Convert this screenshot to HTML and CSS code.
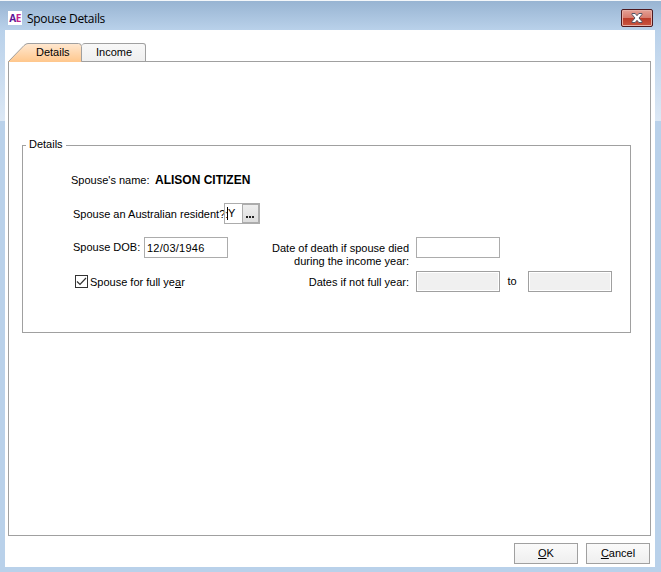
FILE: index.html
```html
<!DOCTYPE html>
<html lang="en">
<head>
<meta charset="utf-8">
<title>Spouse Details</title>
<link rel="stylesheet" href="styles.css">
</head>
<body>
<div class="window">
  <header class="titlebar">
    <span class="app-icon"><span class="app-a">A</span><span class="app-e">E</span></span>
    <h1 class="title">Spouse Details</h1>
    <button class="close" aria-label="Close">
      <svg width="12" height="10" viewBox="0 0 12 10"><path d="M1 .5h3.2L6 2.7 7.8.5H11v1L8 5l3 3.5v1H7.8L6 7.3 4.2 9.5H1v-1L4 5 1 1.5z" fill="#fff" stroke="#535666" stroke-width="1"/></svg>
    </button>
  </header>
  <main class="client">
    <nav class="tabs">
      <div class="tab tab-active">
        <svg class="tab-shape" width="74" height="19" viewBox="0 0 74 19">
          <defs><linearGradient id="warm" x1="0" y1="0" x2="0" y2="1"><stop offset="0" stop-color="#ffe8d1"/><stop offset="1" stop-color="#ffc78c"/></linearGradient></defs>
          <path d="M.5 19v-.8L16 2.5Q18 .5 20 .5H70.500Q73.500 .5 73.500 3.500V19z" fill="url(#warm)"/>
          <path d="M.5 18.500L16 2.500Q18 .5 20 .5H70.500Q73.500 .5 73.500 3.500V18.500" fill="none" stroke="#a0a0a0"/>
        </svg>
        <span class="tab-label t-details">Details</span>
      </div>
      <div class="tab tab-plain"><span class="tab-label t-income">Income</span></div>
    </nav>
    <section class="page">
      <div class="group">
        <span class="legend">Details</span>
        <div class="row row-name"><span class="label l-name">Spouse's name:</span><strong class="name">ALISON CITIZEN</strong></div>
        <div class="row row-resident">
          <span class="label l-resident">Spouse an Australian resident?:</span>
          <div class="lookup"><span class="caret"></span><span class="lookup-value">Y</span><button class="more"><i></i><i></i><i></i></button></div>
        </div>
        <div class="row row-dob">
          <span class="label l-dob">Spouse DOB:</span>
          <div class="field dob">12/03/1946</div>
          <span class="label l-death"><span class="line1">Date of death if spouse died</span><br><span class="line2">during the income year:</span></span>
          <div class="field"></div>
        </div>
        <div class="row row-full">
          <span class="check"><svg width="11" height="11" viewBox="0 0 11 11"><path d="M1 5.500L4 8.500L10 2" fill="none" stroke="#333" stroke-width="1.200"/></svg></span>
          <span class="label l-full">Spouse for full ye<u>a</u>r</span>
          <span class="label l-dates">Dates if not full year:</span>
          <div class="field disabled"></div>
          <span class="label l-to">to</span>
          <div class="field disabled"></div>
        </div>
      </div>
    </section>
    <footer class="actions">
      <button class="btn"><span class="b-ok"><u>O</u>K</span></button>
      <button class="btn"><span class="b-cancel"><u>C</u>ancel</span></button>
    </footer>
  </main>
</div>
</body>
</html>
```
FILE: styles.css
```css
* { box-sizing: border-box; }
body { margin: 0; font: 11px/13px "Liberation Sans", Arial, sans-serif; color: #000; }
button { font: inherit; color: inherit; padding: 0; margin: 0; }
.window {
  width: 661px; height: 572px; padding: 0 6px 5px 5px;
  background: linear-gradient(#98b4d2, #b9d1ea 30px, #dce8f5 120px, #b9d1ea 120px);
  border-top: 1px solid #f4f7fa;
}
.titlebar {
  height: 29px; display: flex; align-items: flex-start; margin: 0 -6px 0 -5px; padding-left: 8px;
  background: linear-gradient(#98b4d2, #b9d1ea);
}
.app-icon { width: 14px; height: 14px; margin-top: 10px; background: #fff; display: flex; justify-content: center; font: bold 10px/14px "Open Sans", sans-serif; letter-spacing: -.4px; }
.app-a { color: #5a1398; }
.app-e { color: #c3218c; }
.title { margin: 9px auto 0 5px; font: 12px/17px "Open Sans", sans-serif; letter-spacing: -.3px; white-space: nowrap; }
.close {
  width: 32px; height: 18px; margin: 8px 8px 0 0; border: 1px solid #4e1a1f; border-radius: 2px;
  background: linear-gradient(#e5a196, #d77b6d 48%, #bb3c2a 52%, #c95540);
  box-shadow: inset 0 0 0 1px #e7aea5; display: flex; align-items: center; justify-content: center;
}
.client { height: 537px; background: #fff; padding: 13px 4px 0 3px; }
.tabs { display: flex; height: 18px; }
.tab { position: relative; height: 19px; display: flex; align-items: center; }
.tab-active { width: 74px; z-index: 1; }
.tab-shape { position: absolute; left: 0; top: 0; }
.tab-label { position: relative; }
.t-details { margin-left: 28px; }
.tab-plain { width: 64px; border: 1px solid #a0a0a0; border-left: 0; border-radius: 3px 3px 0 0; background: linear-gradient(#f8f8f8, #efefef); }
.t-income { margin-left: 14px; }
.page { height: 475px; border: 1px solid #a0a0a0; padding: 83px 19px 0 13px; width: 643px; }
.group { position: relative; height: 188px; border: 1px solid #a0a0a0; padding-top: 28px; }
.legend { position: absolute; left: 3px; top: -8px; padding: 0 3px; background: #fff; }
.row { display: flex; align-items: flex-start; white-space: nowrap; }
.label { flex: none; }
.row-name { height: 29px; padding-left: 48px; }
.l-name { width: 84px; }
.name { font-size: 12px; line-height: 13px; }
.row-resident { height: 34px; padding-left: 50px; }
.l-resident { width: 151px; margin-top: 5px; }
.lookup { width: 36px; height: 21px; border: 1px solid #acacac; display: flex; align-items: center; padding-left: 2px; }
.caret { width: 1px; height: 13px; background: #000; }
.lookup-value { width: 14px; }
.more { width: 18px; height: 19px; border: 1px solid #acacac; background: linear-gradient(#eee, #ddd); display: flex; justify-content: center; gap: 1px; padding-top: 11px; }
.more i { width: 2px; height: 2px; background: #222; }
.row-dob { height: 34px; padding-left: 50px; }
.l-dob { width: 71px; margin-top: 4px; }
.field { width: 84px; height: 21px; border: 1px solid #acacac; background: #fff; flex: none; }
.dob { padding: 4px 2px; letter-spacing: .25px; }
.l-death { width: 181px; margin: 5px 7px 0 0; text-align: right; }
.row-full { padding-left: 52px; }
.check { width: 13px; height: 13px; border: 1px solid #333; margin-top: 4px; }
.check svg { display: block; }
.l-full { width: 92px; margin: 5px 0 0 2px; }
.l-dates { width: 227px; margin: 5px 7px 0 0; text-align: right; }
.disabled { background: #f0f0f0; border-color: #a0a0a0; box-shadow: inset 0 0 0 1px #fff; }
.l-to { width: 28px; text-align: center; padding-right: 4px; margin-top: 4px; }
.actions { display: flex; justify-content: flex-end; gap: 8px; padding: 7px 1px 0 0; }
.btn { width: 64px; height: 21px; border: 1px solid #a0a0a0; background: linear-gradient(#fafafa, #efefef); }
```
